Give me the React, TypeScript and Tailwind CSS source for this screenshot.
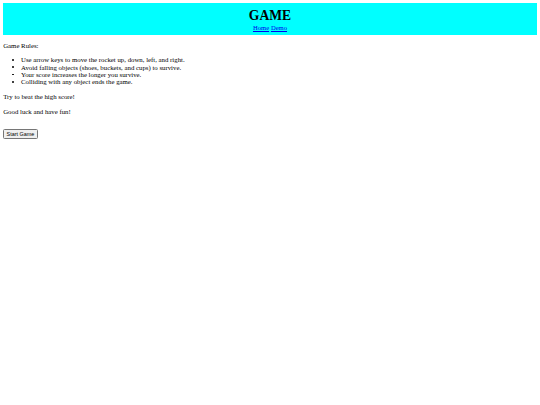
const rules = [
  "Use arrow keys to move the rocket up, down, left, and right.",
  "Avoid falling objects (shoes, buckets, and cups) to survive.",
  "Your score increases the longer you survive.",
  "Colliding with any object ends the game.",
];

export default function App() {
  return (
    <div className="min-h-[405px] bg-white p-[3.2px] font-['Liberation_Serif',serif] text-[6.8px] leading-[7.36px] text-black">
      {/* Header */}
      <div className="flex h-[32px] flex-col items-center justify-center bg-[#00ffff] pt-[1.5px]">
        <h1 className="text-[13.6px] font-bold leading-[14px]">GAME</h1>
        <nav className="mt-[0.5px] flex gap-[1.8px] text-[6.6px]">
          <a href="#" className="text-[#0000ee] underline">
            Home
          </a>
          <a href="#" className="text-[#0000ee] underline">
            Demo
          </a>
        </nav>
      </div>

      <p className="mt-[6.8px]">Game Rules:</p>
      <ul className="mt-[6.8px] mb-[7.8px] pl-[9px]">
        {rules.map((rule) => (
          <li key={rule} className="flex items-center">
            <span className="flex w-[8.8px] shrink-0 items-center">
              <span className="h-[1.8px] w-[1.8px] rounded-full bg-black" />
            </span>
            {rule}
          </li>
        ))}
      </ul>
      <p className="my-[6.8px]">Try to beat the high score!</p>
      <p className="mt-[6.8px] mb-[5.8px]">Good luck and have fun!</p>
      <br />
      <button className="mt-[0.5px] rounded-[1.5px] border-[0.8px] border-[#767676] bg-[#efefef] px-[2.4px] py-[1px] font-['Liberation_Sans',sans-serif] text-[5.4px] leading-[6.2px]">
        Start Game
      </button>
    </div>
  );
}
